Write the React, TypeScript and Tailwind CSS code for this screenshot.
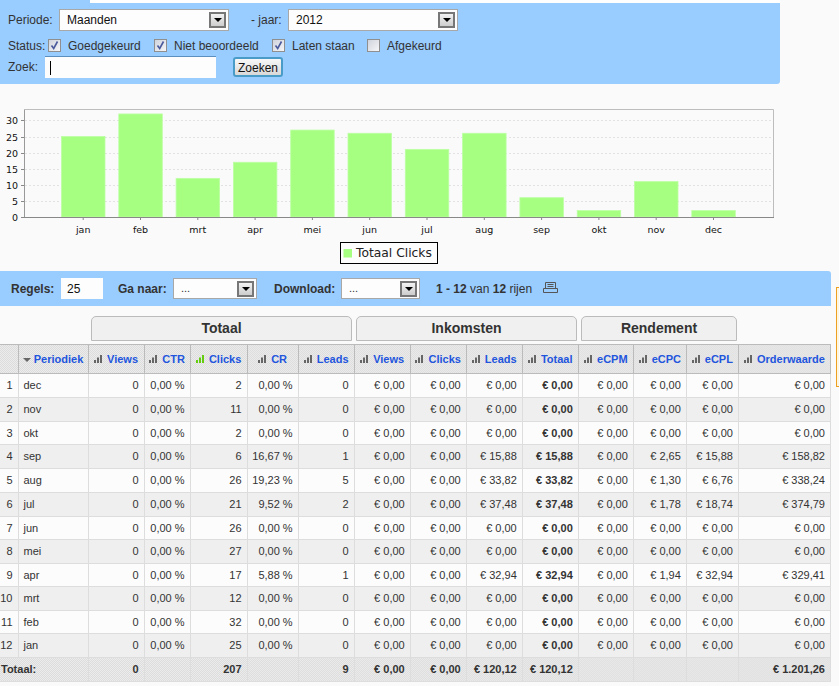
import type { ReactNode } from "react";

const months = ["jan", "feb", "mrt", "apr", "mei", "jun", "jul", "aug", "sep", "okt", "nov", "dec"];
const clicks = [25, 32, 12, 17, 27, 26, 21, 26, 6, 2, 11, 2];
const gridY = [201, 185, 169, 153, 137, 120];

const headers = ["Views", "CTR", "Clicks", "CR", "Leads", "Views", "Clicks", "Leads", "Totaal", "eCPM", "eCPC", "eCPL", "Orderwaarde"];
const widths = [18, 70, 56, 46, 57, 51, 56, 56, 56, 56, 56, 55, 53, 52, 92];

const z = "€ 0,00";
const rows = [
  { n: 1, m: "dec", c: "2", cr: "0,00 %", l: "0", li: z, t: z, cpc: z, cpl: z, o: z, tall: true },
  { n: 2, m: "nov", c: "11", cr: "0,00 %", l: "0", li: z, t: z, cpc: z, cpl: z, o: z, tall: true },
  { n: 3, m: "okt", c: "2", cr: "0,00 %", l: "0", li: z, t: z, cpc: z, cpl: z, o: z, tall: false },
  { n: 4, m: "sep", c: "6", cr: "16,67 %", l: "1", li: "€ 15,88", t: "€ 15,88", cpc: "€ 2,65", cpl: "€ 15,88", o: "€ 158,82", tall: true },
  { n: 5, m: "aug", c: "26", cr: "19,23 %", l: "5", li: "€ 33,82", t: "€ 33,82", cpc: "€ 1,30", cpl: "€ 6,76", o: "€ 338,24", tall: true },
  { n: 6, m: "jul", c: "21", cr: "9,52 %", l: "2", li: "€ 37,48", t: "€ 37,48", cpc: "€ 1,78", cpl: "€ 18,74", o: "€ 374,79", tall: true },
  { n: 7, m: "jun", c: "26", cr: "0,00 %", l: "0", li: z, t: z, cpc: z, cpl: z, o: z, tall: false },
  { n: 8, m: "mei", c: "27", cr: "0,00 %", l: "0", li: z, t: z, cpc: z, cpl: z, o: z, tall: true },
  { n: 9, m: "apr", c: "17", cr: "5,88 %", l: "1", li: "€ 32,94", t: "€ 32,94", cpc: "€ 1,94", cpl: "€ 32,94", o: "€ 329,41", tall: false },
  { n: 10, m: "mrt", c: "12", cr: "0,00 %", l: "0", li: z, t: z, cpc: z, cpl: z, o: z, tall: true },
  { n: 11, m: "feb", c: "32", cr: "0,00 %", l: "0", li: z, t: z, cpc: z, cpl: z, o: z, tall: false },
  { n: 12, m: "jan", c: "25", cr: "0,00 %", l: "0", li: z, t: z, cpc: z, cpl: z, o: z, tall: true },
];

const footer = ["0", "", "207", "", "9", z, z, "€ 120,12", "€ 120,12", "", "", "", "€ 1.201,26"];

const dither = "bg-[repeating-conic-gradient(#dcdcdc_0_25%,#ececec_0_50%)] bg-[length:2px_2px]";

function FakeSelect({ value, className, small }: { value: string; className: string; small?: boolean }) {
  return (
    <div className={`flex items-center justify-between border border-[#a8a8a8] bg-[#fdfdfd] pl-[7px] pr-[2px] ${className}`}>
      <span className={small ? "text-[11px] text-[#333]" : "text-[12px] text-[#111]"}>{value}</span>
      <span className="flex h-[16px] w-[17px] items-center justify-center border-2 border-[#777] bg-gradient-to-b from-[#f2f2f2] to-[#cdcdcd]">
        <span className="h-0 w-0 border-x-[4px] border-t-[4px] border-x-transparent border-t-black" />
      </span>
    </div>
  );
}

function Check({ on, className, children }: { on?: boolean; className: string; children: ReactNode }) {
  return (
    <label className={`flex items-center ${className}`}>
      <span className="mb-[2px] flex h-[13px] w-[13px] items-center justify-center border border-[#8f8f8f] bg-gradient-to-br from-[#cfd3dc] to-[#f6f6f8]">
        {on && (
          <svg viewBox="0 0 11 11" className="h-[11px] w-[11px]">
            <path d="M2.5 5.5 L4.7 8.5 L8.5 1.5" fill="none" stroke="#4a5a9c" strokeWidth="1.6" />
          </svg>
        )}
      </span>
      <span className="ml-[7px]">{children}</span>
    </label>
  );
}

function Bars({ green }: { green?: boolean }) {
  const fill = green ? "#66cc11" : "#666666";
  return (
    <svg viewBox="0 0 8 8" className="mr-[5px] h-[8px] w-[8px] shrink-0">
      <rect x="0" y="5" width="2" height="3" fill={fill} />
      <rect x="3" y="2.5" width="2" height="5.5" fill={fill} />
      <rect x="6" y="0" width="2" height="8" fill={fill} />
    </svg>
  );
}

function Chart() {
  return (
    <svg viewBox="0 84 839 187" className="block h-[187px] w-[839px]" fontFamily="'DejaVu Sans', sans-serif">
      <path d="M24.5 109.5 H773.5 V217" fill="none" stroke="#bdbdbd" />
      <path d="M24.5 109.5 V217" fill="none" stroke="#999999" />
      {gridY.map((y, i) => (
        <g key={y}>
          <line x1="25" x2="773" y1={y + 0.5} y2={y + 0.5} stroke="#e2e2e2" strokeDasharray="2 2" />
          <line x1="21" x2="24" y1={y + 0.5} y2={y + 0.5} stroke="#888888" />
          <text x="18" y={y + 4} textAnchor="end" fontSize="9.5" fill="#111">
            {(i + 1) * 5}
          </text>
        </g>
      ))}
      <text x="18" y="221" textAnchor="end" fontSize="9.5" fill="#111">
        0
      </text>
      {clicks.map((c, i) => {
        const x = 61.5 + i * 57.3;
        const h = c * 3.22;
        return (
          <g key={months[i]}>
            <rect x={x} y={217 - h} width="43.5" height={h} fill="#a6ff80" stroke="#bcffa3" strokeWidth="0.8" />
            <line x1={x + 21.7} x2={x + 21.7} y1="217" y2="220" stroke="#888888" />
            <text x={x + 21.7} y="233" textAnchor="middle" fontSize="9.5" fill="#111">
              {months[i]}
            </text>
          </g>
        );
      })}
      <line x1="21" x2="774" y1="217.5" y2="217.5" stroke="#888888" />
      <rect x="340.5" y="242.5" width="97" height="21" fill="#fdfdfd" stroke="#000000" />
      <rect x="343.5" y="249" width="8.5" height="8.5" fill="#a6ff80" />
      <text x="356" y="257" fontSize="12.3" fill="#222">
        Totaal Clicks
      </text>
    </svg>
  );
}

export default function App() {
  return (
    <div className="relative h-[686px] w-[839px] overflow-hidden bg-[#fafafa] font-['Liberation_Sans',Arial,sans-serif] text-[12px] text-[#333]">
      {/* filter panel */}
      <div className="h-[84px] w-[780px] rounded-br-[3px] bg-[#99ccff]">
        <div className="ml-[90px] h-[3px] bg-white" />
        <div className="mt-[6px] flex h-[22px] items-center pl-[8px]">
          <span className="w-[51px]">Periode:</span>
          <FakeSelect value="Maanden" className="h-[22px] w-[170px]" />
          <span className="ml-[22px] w-[37px]">- jaar:</span>
          <FakeSelect value="2012" className="h-[22px] w-[170px]" />
        </div>
        <div className="mt-[6px] flex h-[18px] items-center pl-[8px]">
          <span className="w-[40px]">Status:</span>
          <Check on className="w-[106px]">Goedgekeurd</Check>
          <Check on className="w-[118px]">Niet beoordeeld</Check>
          <Check on className="w-[95px]">Laten staan</Check>
          <Check className="w-[95px]">Afgekeurd</Check>
        </div>
        <div className="mt-px flex h-[22px] items-center pl-[8px]">
          <span className="w-[37px]">Zoek:</span>
          <div className="flex h-[22px] w-[171px] items-center border-t border-t-[#5a8fc0] bg-[#fdfdfd] pl-[5px]">
            <span className="h-[14px] w-px bg-black" />
          </div>
          <button className="ml-[17px] h-[20px] w-[50px] rounded-[3px] border-2 border-[#4a9cc8] bg-gradient-to-b from-[#f8f8f8] to-[#d8d8d8] text-[12px] text-[#111]">
            Zoeken
          </button>
        </div>
      </div>

      <Chart />

      {/* toolbar */}
      <div className="flex h-[35px] w-[831px] items-center rounded-tr-[3px] bg-[#99ccff] pl-[11px] font-bold">
        <span className="w-[50px]">Regels:</span>
        <div className="flex h-[21px] w-[42px] items-center bg-[#fdfdfd] pl-[6px] text-[12px] font-normal text-[#111]">25</div>
        <span className="ml-[15px] w-[55px]">Ga naar:</span>
        <FakeSelect small value="..." className="h-[21px] w-[84px] font-normal" />
        <span className="ml-[17px] w-[67px]">Download:</span>
        <FakeSelect small value="..." className="h-[21px] w-[79px] font-normal" />
        <span className="ml-[16px] font-normal">
          <b>1 - 12</b> van <b>12</b> rijen
        </span>
        <svg viewBox="0 0 15 11" className="ml-[11px] mb-[3px] h-[11px] w-[15px]">
          <path d="M2.5 .5 H12.5 V6.5 H2.5 Z M4.5 2.5 H10.5 M4.5 4.5 H10.5 M.5 6.5 H14.5 V10.5 H.5 Z" fill="none" stroke="#555555" />
        </svg>
      </div>

      {/* column groups */}
      <div className="ml-[91px] mt-[10px] flex h-[25px] gap-[4px] text-[14px] font-bold text-[#333]">
        <div className="flex w-[261px] items-center justify-center rounded-t-[5px] border border-[#bbbbbb] bg-[#f0f0f0]">Totaal</div>
        <div className="flex w-[221px] items-center justify-center rounded-t-[5px] border border-[#bbbbbb] bg-[#f0f0f0]">Inkomsten</div>
        <div className="flex w-[156px] items-center justify-center rounded-t-[5px] border border-[#bbbbbb] bg-[#f0f0f0]">Rendement</div>
      </div>

      <table className="mt-[3px] w-[831px] table-fixed border-collapse text-[11px]">
        <colgroup>
          {widths.map((w, i) => (
            <col key={i} style={{ width: w }} />
          ))}
        </colgroup>
        <thead>
          <tr className={`h-[29px] ${dither}`}>
            <th className="border border-l-0 border-[#bbbbbb]" />
            <th className="border border-[#bbbbbb] font-bold text-[#2255dd]">
              <span className="flex items-center justify-center">
                <span className="mr-[3px] mt-[2px] h-0 w-0 border-x-[4px] border-t-[4px] border-x-transparent border-t-[#666]" />
                Periodiek
              </span>
            </th>
            {headers.map((h, i) => (
              <th key={i} className="border border-[#bbbbbb] font-bold text-[#2255dd]">
                <span className="flex items-center justify-center">
                  <Bars green={i === 2} />
                  {h}
                </span>
              </th>
            ))}
          </tr>
        </thead>
        <tbody>
          {rows.map((r) => {
            const cells = ["0", "0,00 %", r.c, r.cr, r.l, z, z, r.li, r.t, z, r.cpc, r.cpl, r.o];
            return (
              <tr key={r.n} className={`${r.tall ? "h-[24px]" : "h-[23px]"} ${r.n % 2 === 0 ? "bg-[#efefef]" : "bg-[#fcfcfc]"}`}>
                <td className="border border-l-0 border-[#dddddd] pr-[5px] text-right">{r.n}</td>
                <td className="border border-[#dddddd] pl-[5px]">{r.m}</td>
                {cells.map((c, i) => (
                  <td key={i} className={`border border-[#dddddd] pr-[5px] text-right ${i === 8 ? "font-bold" : ""}`}>
                    {c}
                  </td>
                ))}
              </tr>
            );
          })}
          <tr className={`h-[24px] font-bold ${dither}`}>
            <td colSpan={2} className="border border-x-0 border-[#dddddd] pl-px">
              Totaal:
            </td>
            {footer.map((c, i) => (
              <td key={i} className="border border-[#dddddd] pr-[5px] text-right">
                {c}
              </td>
            ))}
          </tr>
        </tbody>
      </table>

      {/* clipped side tab */}
      <div className="absolute left-[836px] top-[287px] h-[100px] w-[3px] border-y border-l border-[#eea020] bg-[#fdf6e0]" />
    </div>
  );
}
